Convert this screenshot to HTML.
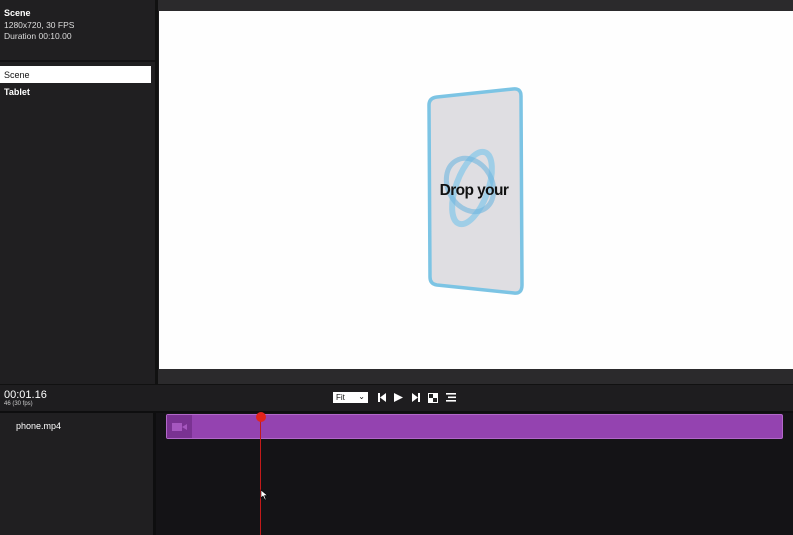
<!DOCTYPE html>
<html><head><style>
body{margin:0;width:793px;height:535px;overflow:hidden;background:#1c1b1d;font-family:"Liberation Sans",sans-serif;color:#fff;position:relative}
div{position:absolute;box-sizing:border-box}
</style></head><body>
<div style="left:0;top:0;width:155px;height:384px;background:#201f21"></div>
<div style="left:0;top:60px;width:155px;height:2px;background:#141315"></div>
<div style="left:4px;top:8px;font-size:9px;font-weight:bold">Scene</div>
<div style="left:4px;top:20px;font-size:8.5px;color:#ddd">1280x720, 30 FPS</div>
<div style="left:4px;top:31px;font-size:8.5px;color:#ddd">Duration 00:10.00</div>
<div style="left:0;top:66px;width:151px;height:17px;background:#fff;color:#111;font-size:9px;padding:4px 0 0 4px">Scene</div>
<div style="left:4px;top:87px;font-size:9px;font-weight:bold">Tablet</div>
<div style="left:155px;top:0;width:3px;height:384px;background:#111"></div>
<div style="left:158px;top:0;width:635px;height:11px;background:#2b2a2c"></div>
<div style="left:159px;top:11px;width:634px;height:358px;background:#fefefe"></div>
<div style="left:158px;top:369px;width:635px;height:15px;background:#2b2a2c"></div>
<svg style="position:absolute;left:0;top:0" width="793" height="535">
<path d="M437 97 L513 89 Q521 88 521 96 L522 285 Q522 294 514 293 L437 285 Q430 284 430 277 L429 105 Q429 98 437 97Z" fill="#dfdee2" stroke="#7cc4e4" stroke-width="3.5"/>
<ellipse cx="472" cy="188" rx="16" ry="38" transform="rotate(20 472 188)" fill="none" stroke="#8fc9e8" stroke-width="6" opacity=".8"/>
<ellipse cx="470" cy="185" rx="22" ry="28" transform="rotate(-30 470 185)" fill="none" stroke="#6fb6e0" stroke-width="5" opacity=".6"/>
<text x="474" y="195" text-anchor="middle" font-family="Liberation Sans" font-weight="bold" font-size="15.5" fill="#111" letter-spacing="-0.6">Drop your</text>
</svg>
<div style="left:0;top:384px;width:793px;height:27px;background:#1e1d1f;border-top:1px solid #111"></div>
<div style="left:4px;top:389px;font-size:11px">00:01.16</div>
<div style="left:4px;top:401px;font-size:6px;color:#ccc">46 (30 fps)</div>
<div style="left:333px;top:392px;width:35px;height:11px;background:#fff;color:#111;font-size:8px;padding:1px 0 0 3px">Fit<span style="position:absolute;right:3px;top:0">⌄</span></div>
<svg style="position:absolute;left:375px;top:392px" width="90" height="12">
<rect x="3" y="1" width="2" height="9" fill="#fff"/><path d="M11 1 L5 5.5 L11 10Z" fill="#fff"/>
<path d="M19 1 L28 5.5 L19 10Z" fill="#fff"/>
<path d="M37 1 L43 5.5 L37 10Z" fill="#fff"/><rect x="43" y="1" width="2" height="9" fill="#fff"/>
<rect x="53" y="1" width="10" height="10" fill="#fff"/><rect x="54" y="2" width="4" height="4" fill="#222"/><rect x="58" y="6" width="4" height="4" fill="#222"/>
<rect x="71" y="1" width="10" height="1.6" fill="#fff"/><rect x="73" y="4.5" width="8" height="1.6" fill="#fff"/><rect x="71" y="8" width="10" height="1.6" fill="#fff"/>
</svg>
<div style="left:0;top:411px;width:793px;height:2px;background:#0e0e0f"></div>
<div style="left:0;top:413px;width:153px;height:122px;background:#201f21"></div>
<div style="left:153px;top:413px;width:3px;height:122px;background:#0e0e0f"></div>
<div style="left:156px;top:413px;width:637px;height:122px;background:#141316"></div>
<div style="left:16px;top:421px;font-size:9px">phone.mp4</div>
<div style="left:166px;top:414px;width:617px;height:25px;background:#9443b0;border:1px solid #b268c9;border-radius:2px"></div>
<div style="left:167px;top:415px;width:25px;height:23px;background:#7a3292"></div>
<svg style="position:absolute;left:171px;top:422px" width="18" height="10"><rect x="1" y="1" width="10" height="8" fill="#a657bf"/><path d="M11 5 L16 2 L16 8Z" fill="#a657bf"/></svg>
<div style="left:260px;top:418px;width:1px;height:117px;background:#c21a1a"></div>
<div style="left:256px;top:412px;width:10px;height:10px;border-radius:50%;background:#e3241c"></div>
<svg style="position:absolute;left:260px;top:489px" width="10" height="12"><path d="M1 1 L1 9 L3 7 L5 11 L6 10.5 L4.5 6.5 L7.5 6.5Z" fill="#fff" stroke="#000" stroke-width=".6"/></svg>
</body></html>
